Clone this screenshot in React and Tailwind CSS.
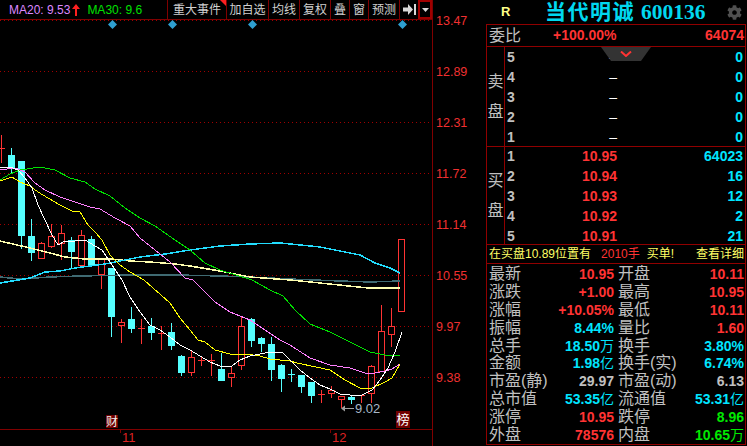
import React from "react";
import { FaCog } from "react-icons/fa";

const SANS = "font-['Liberation_Sans','Noto_Sans_CJK_SC',sans-serif]";

// [x, bodyTop, bodyBottom, wickTop, wickBottom, up]
const candles = [
  [1, 148, 148, 135, 163, 1],
  [11, 155, 169, 148, 173, 0],
  [21, 161, 236, 161, 249, 0],
  [31, 236, 253, 219, 261, 0],
  [41, 243, 258, 242, 258, 1],
  [51, 236, 246, 224, 248, 1],
  [61, 233, 243, 225, 260, 1],
  [71, 240, 252, 237, 269, 0],
  [81, 235, 265, 230, 267, 1],
  [91, 239, 266, 236, 267, 0],
  [101, 258, 274, 258, 289, 1],
  [111, 268, 317, 268, 337, 0],
  [121, 322, 325, 319, 343, 1],
  [131, 319, 329, 307, 333, 0],
  [141, 328, 328, 319, 344, 1],
  [151, 326, 333, 318, 340, 0],
  [161, 333, 333, 326, 350, 1],
  [171, 332, 346, 323, 350, 0],
  [181, 356, 373, 355, 376, 0],
  [191, 357, 372, 351, 376, 1],
  [201, 360, 360, 356, 366, 1],
  [211, 360, 360, 354, 376, 1],
  [221, 369, 381, 353, 381, 0],
  [231, 373, 377, 367, 387, 1],
  [241, 326, 365, 316, 370, 1],
  [251, 319, 341, 318, 347, 0],
  [261, 338, 344, 337, 352, 0],
  [271, 344, 370, 337, 381, 0],
  [281, 365, 379, 364, 392, 0],
  [291, 374, 374, 369, 382, 0],
  [301, 375, 387, 375, 393, 0],
  [311, 382, 396, 382, 403, 0],
  [321, 394, 394, 390, 403, 1],
  [331, 390, 393, 386, 398, 1],
  [341, 396, 399, 396, 408, 1],
  [351, 397, 400, 396, 404, 0],
  [361, 395, 395, 395, 403, 1],
  [371, 366, 393, 365, 403, 1],
  [381, 331, 371, 305, 371, 1],
  [391, 326, 334, 308, 347, 1],
  [401, 239, 311, 239, 311, 1],
];

const maLines = [
  { color: "#3f6a72", w: 1.5, pts: "0,277 20,279 50,277 80,276 130,275 178,275 220,276 250,277 290,279 315,280 340,281 370,282 400,281" },
  { color: "#ffffb0", w: 1.5, pts: "0,241 30,248 50,253 65,257 85,259 110,259 130,261 150,262 175,264 190,266 220,271 250,277 290,280 320,283 368,288 400,288" },
  { color: "#22ddff", w: 1.5, pts: "0,283 30,278 45,272 60,271 75,268 105,264 120,261 140,257 165,254 190,250 220,246 250,244 280,243 300,245 320,247 340,251 360,255 375,263 390,268 400,273" },
  { color: "#00e000", w: 1, pts: "0,180 10,174 20,170 40,167 55,170 70,178 85,182 95,189 110,196 125,208 140,218 155,226 175,240 190,250 205,263 220,270 252,280 270,290 283,296 295,310 310,324 330,332 350,342 370,352 385,355 400,356" },
  { color: "#ff80ff", w: 1, pts: "0,170 15,168 25,172 35,183 45,190 60,197 75,202 90,207 100,209 115,218 130,226 140,238 155,250 170,262 185,278 193,280 215,302 230,312 250,320 265,330 280,340 290,345 310,358 330,365 350,368 365,373 375,373 385,371 392,369 400,364" },
  { color: "#ffff00", w: 1, pts: "0,181 12,177 20,182 30,186 38,192 48,198 60,205 72,211 80,212 88,225 95,232 102,240 110,255 120,265 130,272 144,280 170,303 180,318 190,330 198,340 205,342 215,350 230,354 245,354 260,356 270,359 290,361 297,363 330,370 345,380 360,388 372,388 385,382 392,378 400,364" },
  { color: "#ffffff", w: 1, pts: "0,168 10,167 18,170 25,178 32,188 38,205 45,220 52,235 58,245 65,241 75,241 85,240 95,246 102,250 110,262 122,280 130,297 140,312 150,325 160,330 170,337 180,345 190,350 200,356 210,362 220,366 232,366 240,360 250,356 260,354 270,352 282,352 291,361 300,370 310,378 320,385 330,389 340,394 350,395 362,395 372,390 380,380 388,368 395,352 402,332" },
];

const tools = [
  { label: "重大事件", w: "w-[59px]", flag: true },
  { label: "加自选", w: "w-[42px]" },
  { label: "均线", w: "w-[31px]" },
  { label: "复权", w: "w-[31px]" },
  { label: "叠", w: "w-[19px]" },
  { label: "窗", w: "w-[19px]" },
  { label: "预测", w: "w-[31px]" },
];

const axis = ["13.47", "12.89", "12.31", "11.72", "11.14", "10.55", "9.97", "9.38"];

const sells = ["5", "4", "3", "2", "1"];
const buys = [
  ["1", "10.95", "64023"],
  ["2", "10.94", "16"],
  ["3", "10.93", "12"],
  ["4", "10.92", "2"],
  ["5", "10.91", "21"],
];

const RED = "text-[#ff3333]";
const CYAN = "text-[#00e5ff]";
const GREY = "text-[#c0c0c0]";
const GREEN = "text-[#00e800]";

const info = [
  ["最新", "10.95", RED, "开盘", "10.11", RED],
  ["涨跌", "+1.00", RED, "最高", "10.95", RED],
  ["涨幅", "+10.05%", RED, "最低", "10.11", RED],
  ["振幅", "8.44%", CYAN, "量比", "1.60", RED],
  ["总手", "18.50万", CYAN, "换手", "3.80%", CYAN],
  ["金额", "1.98亿", CYAN, "换手(实)", "6.74%", CYAN],
  ["市盈(静)", "29.97", GREY, "市盈(动)", "6.13", GREY],
  ["总市值", "53.35亿", CYAN, "流通值", "53.31亿", CYAN],
  ["涨停", "10.95", RED, "跌停", "8.96", GREEN],
  ["外盘", "78576", RED, "内盘", "10.65万", GREEN],
];

const Candle = ({ c }) => {
  const [x, top, bottom, wickTop, wickBottom, up] = c;
  const color = up ? "#ff3333" : "#55ffff";
  const mid = x + 0.5;
  return (
    <g>
      <line x1={mid} x2={mid} y1={wickTop} y2={top} stroke={color} />
      <line x1={mid} x2={mid} y1={bottom} y2={wickBottom} stroke={color} />
      {top === bottom ? (
        <line x1={x - 3} x2={x + 4} y1={top + 0.5} y2={top + 0.5} stroke={color} />
      ) : up ? (
        <rect x={x - 2.5} y={top + 0.5} width={6} height={bottom - top} fill="none" stroke={color} />
      ) : (
        <rect x={x - 3} y={top} width={7} height={bottom - top} fill={color} />
      )}
    </g>
  );
};

const Chart = () => (
  <svg className="block" width="432" height="409" viewBox="0 20 432 409" shapeRendering="crispEdges">
    {[20.5, 71.5, 122.5, 173.5, 224.5, 275.5, 326.5, 377.5].map((y) => (
      <line key={y} x1="0" x2="432" y1={y} y2={y} stroke="#a00000" strokeDasharray="1 3" />
    ))}
    {[112.5, 172.5, 252.5, 402.5].map((x) => (
      <polygon key={x} points={`${x},20 ${x + 4.5},24.5 ${x},29 ${x - 4.5},24.5`} fill="#2e9fd0" shapeRendering="auto" />
    ))}
    {candles.map((c) => (
      <Candle key={c[0]} c={c} />
    ))}
    {maLines.map((l) => (
      <polyline key={l.color} points={l.pts} fill="none" stroke={l.color} strokeWidth={l.w} />
    ))}
    <line x1="344" x2="354" y1="408.5" y2="408.5" stroke="#a0a0a0" />
    <polygon points="341,408.5 345,405.5 345,411.5" fill="#a0a0a0" shapeRendering="auto" />
    <text x="355" y="413" fontSize="13" fill="#a8b8c8" fontFamily="Liberation Sans" shapeRendering="auto">9.02</text>
  </svg>
);

const Toolbar = () => (
  <div className="flex h-5 border-b border-[#800000]">
    <div className="flex w-[167px] items-center whitespace-nowrap pl-[9px] text-[12px]">
      <span className="text-[#dd88ff]">MA20: 9.53</span>
      <svg className="ml-[2px] shrink-0" width="8" height="12" viewBox="0 0 8 12">
        <path d="M4 0 L8 5 H5 V12 H3 V5 H0 Z" fill="#ff2020" />
      </svg>
      <span className="ml-[7px] text-[#00e000]">MA30: 9.6</span>
    </div>
    {tools.map((t) => (
      <div
        key={t.label}
        className={`relative flex ${t.w} items-center justify-center border-l border-[#800000] text-[12px] text-[#d0d0d0]`}
      >
        {t.label}
        {t.flag && (
          <svg className="absolute right-0 top-0" width="6" height="6" viewBox="0 0 6 6">
            <path d="M0 0 H6 V6 Z" fill="#ff2020" />
          </svg>
        )}
      </div>
    ))}
    <div className="flex w-[19px] items-center justify-center border-l border-[#800000]">
      <svg width="13" height="11" viewBox="0 0 13 11">
        <path d="M0 3.5 H5 V0 L10 5.5 L5 11 V7.5 H0 Z" fill="#d8d8d8" />
        <rect x="11" y="0" width="2" height="11" fill="#d8d8d8" />
      </svg>
    </div>
    <div className="flex flex-1 items-center justify-center border-2 border-[#a00000]">
      <svg width="7" height="4" viewBox="0 0 7 4">
        <path d="M0 0 H7 L3.5 4 Z" fill="#d8d8d8" />
      </svg>
    </div>
  </div>
);

const QuoteRow = ({ n, price, vol }) => (
  <div className="flex h-5 items-center">
    <span className="w-[7px] text-[14px] font-bold text-[#c0c0c0]">{n}</span>
    <span className={`w-[103px] text-right text-[14px] ${price === "–" ? "font-normal text-white" : `font-bold ${RED}`}`}>{price}</span>
    <span className={`flex-1 pr-[2px] text-right text-[14px] font-bold ${CYAN}`}>{vol}</span>
  </div>
);

const SideLabel = ({ text }) => (
  <div className="flex w-[18px] flex-col items-center justify-center gap-[14px] border-r border-[#900000] text-[16px] leading-4 text-[#c0c0c0]">
    {text.map((ch) => (
      <span key={ch}>{ch}</span>
    ))}
  </div>
);

const InfoPair = ({ label, value, color, width }) => (
  <div className={`flex ${width} items-center justify-between`}>
    <span className="text-[16px] leading-4 text-[#c0c0c0]">{label}</span>
    <span className={`text-[14px] font-bold leading-4 ${color}`}>
      {value.replace(/[万亿]/, "")}
      <span className="font-normal">{value.match(/[万亿]/)?.[0]}</span>
    </span>
  </div>
);

const App = () => {
  return (
    <div className={`flex h-[446px] w-[747px] overflow-hidden bg-black ${SANS}`}>
      {/* left chart */}
      <div className="relative flex w-[433px] flex-col border-r border-[#800000]">
        <Toolbar />
        <Chart />
        <div className="flex h-[17px] border-t border-[#800000] text-[13px] leading-4 text-[#dd2222]">
          <div className="w-[120px]" />
          <div className="flex w-[210px]">
            <div className="h-[3px] w-px bg-[#800000]" />
            <span className="ml-[1px]">11</span>
          </div>
          <div className="flex">
            <div className="h-[3px] w-px bg-[#800000]" />
            <span className="ml-[1px]">12</span>
          </div>
        </div>
        <div className="absolute left-[106px] top-[415px] flex h-[13px] w-[12px] items-center justify-center bg-[#700000] text-[12px] text-[#eee]">财</div>
        <div className="absolute left-[396px] top-[411px] flex h-[17px] w-[14px] items-center justify-center bg-[#700000] text-[13px] text-white">榜</div>
      </div>

      {/* price axis */}
      <div className="flex w-[53px] flex-col pl-[3px] pt-[14px] text-[12.5px] leading-[14px] text-[#f03030]">
        {axis.map((v) => (
          <div key={v} className="h-[51px]">{v}</div>
        ))}
      </div>

      {/* quote panel */}
      <div className="flex w-[261px] flex-col pb-px">
        <div className="flex h-6 items-center">
          <span className="ml-[15px] w-[44px] text-[13px] font-bold text-[#ffff88]">R</span>
          <span className="text-[21px] font-bold leading-6 tracking-[1.5px] text-[#00d8f0]">当代明诚</span>
          <span className="ml-[6px] font-['Liberation_Serif',serif] text-[21.5px] font-bold leading-6 text-[#00d8f0]">600136</span>
          <FaCog className="ml-[21px] text-[15px] text-[#505050]" />
        </div>

        <div className="relative mr-[1px] flex flex-1 flex-col border border-[#900000]">
          <div className="flex h-[22px] items-center border-b border-[#900000] pl-[2px]">
            <span className="w-[32px] text-[16px] leading-4 text-[#c0c0c0]">委比</span>
            <span className={`ml-[32px] w-[64px] text-[14px] font-bold ${RED}`}>+100.00%</span>
            <span className={`flex-1 pr-[1px] text-right text-[14px] font-bold ${RED}`}>64074</span>
          </div>

          <div className="flex h-[100px] border-b border-[#900000]">
            <SideLabel text={["卖", "盘"]} />
            <div className="flex-1 pl-[2px]">
              {sells.map((n) => (
                <QuoteRow key={n} n={n} price="–" vol="0" />
              ))}
            </div>
          </div>

          <div className="flex h-[98px] border-b border-[#900000]">
            <SideLabel text={["买", "盘"]} />
            <div className="-mt-px flex-1 pl-[2px]">
              {buys.map((b) => (
                <QuoteRow key={b[0]} n={b[0]} price={b[1]} vol={b[2]} />
              ))}
            </div>
          </div>

          <div className="flex h-[19px] items-center whitespace-nowrap border-b border-[#900000] pl-[2px] text-[12px] text-[#ffff66]">
            <span>在买盘10.89位置有</span>
            <span className="ml-[10px] text-[#ff3333]">2010手</span>
            <span className="ml-[7px]">买单!</span>
            <span className="ml-auto pr-[1px]">查看详细</span>
          </div>

          <div className="flex flex-1 flex-col pl-[2px] pt-[1px]">
            {info.map((r) => (
              <div key={r[0]} className="flex h-[17.9px] items-center">
                <InfoPair label={r[0]} value={r[1]} color={r[2]} width="w-[125px]" />
                <div className="ml-[4px] flex-1 pr-[1px]">
                  <InfoPair label={r[3]} value={r[4]} color={r[5]} width="w-full" />
                </div>
              </div>
            ))}
          </div>

          <div className="absolute left-[114px] top-[22px] flex h-[14px] w-[50px] items-start justify-center bg-[#333] [clip-path:polygon(0_0,100%_0,80%_100%,20%_100%)]">
            <svg className="mt-[4px]" width="12" height="6" viewBox="0 0 12 6">
              <path d="M1 0.5 L6 5 L11 0.5" fill="none" stroke="#ff3333" strokeWidth="2" />
            </svg>
          </div>
        </div>
      </div>
    </div>
  );
};

export default App;
